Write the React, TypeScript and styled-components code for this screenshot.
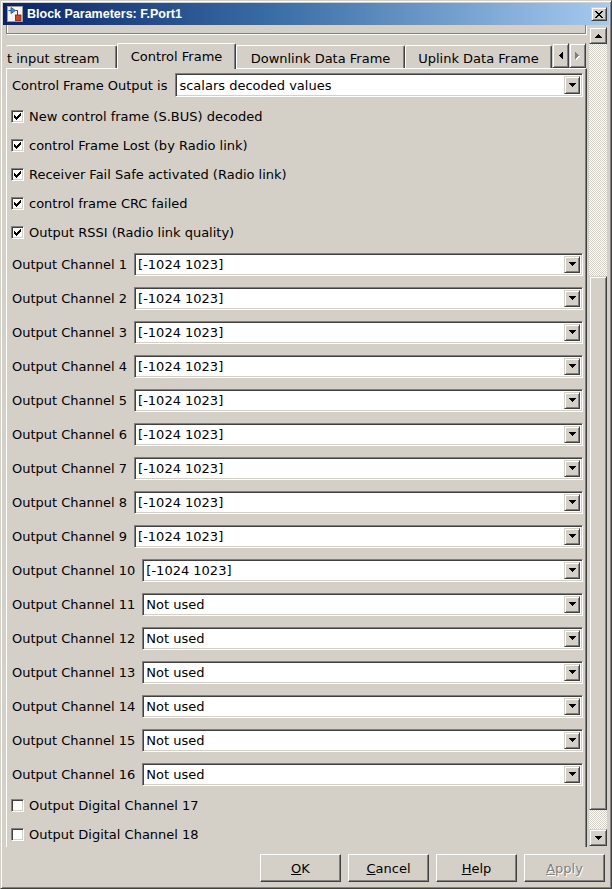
import React from "react";
import styled, { createGlobalStyle, css } from "styled-components";

const FACE = "#d4d0c8";
const SHADOW = "#808080";
const DARK = "#404040";
const HI = "#ffffff";

const GlobalStyle = createGlobalStyle`
  html, body { margin: 0; padding: 0; background: ${FACE}; }
  body {
    font-family: "DejaVu Sans", Verdana, sans-serif;
    font-size: 13px;
    color: #000;
  }
  * { box-sizing: border-box; }
`;

const frameRaised = css`
  border: 1px solid;
  border-color: ${FACE} ${DARK} ${DARK} ${FACE};
  box-shadow: inset 1px 1px ${HI}, inset -1px -1px ${SHADOW};
`;

const pushRaised = css`
  border: 1px solid;
  border-color: ${HI} ${DARK} ${DARK} ${HI};
  box-shadow: inset -1px -1px ${SHADOW};
`;

const sunken = css`
  border: 1px solid;
  border-color: ${SHADOW} ${HI} ${HI} ${SHADOW};
  box-shadow: inset 1px 1px ${DARK}, inset -1px -1px ${FACE};
`;

const Window = styled.div`
  width: 612px;
  height: 889px;
  display: flex;
  flex-direction: column;
  background: ${FACE};
  padding: 2px;
  ${frameRaised}
`;

const TitleBar = styled.div`
  height: 22px;
  flex: none;
  display: flex;
  align-items: center;
  padding: 0 2px 0 4px;
  background: linear-gradient(to right, #0a246a 0%, #3a6ea5 45%, #a6caf0 100%);
`;

const TitleText = styled.div`
  flex: 1;
  margin-left: 4px;
  color: #fff;
  font-family: "Liberation Sans", Arial, sans-serif;
  font-weight: bold;
  font-size: 12.5px;
  white-space: nowrap;
`;

const CloseButton = styled.div`
  width: 16px;
  height: 14px;
  display: flex;
  align-items: center;
  justify-content: center;
  background: ${FACE};
  ${frameRaised}
`;

const Body = styled.div`
  height: 822px;
  flex: none;
  display: flex;
`;

const Content = styled.div`
  flex: 1;
  overflow: hidden;
  display: flex;
  flex-direction: column;
  padding: 0 2px 0 3px;
`;

const GroupStub = styled.div`
  height: 9px;
  flex: none;
  margin-right: 1px;
  border: 1px solid ${SHADOW};
  border-top: none;
  box-shadow: inset 1px 0 ${HI}, 1px 1px 0 ${HI};
`;

const TabStrip = styled.div`
  margin-top: 9px;
  height: 25px;
  flex: none;
  display: flex;
  align-items: flex-end;
`;

const Tab = styled.div<{ $w: number; $active?: boolean; $clipped?: boolean }>`
  width: ${(p) => p.$w}px;
  flex: none;
  height: ${(p) => (p.$active ? 26 : 23)}px;
  display: flex;
  align-items: center;
  justify-content: ${(p) => (p.$clipped ? "flex-start" : "center")};
  padding-top: ${(p) => (p.$active ? 0 : 2)}px;
  padding-left: ${(p) => (p.$clipped ? 1 : 0)}px;
  white-space: nowrap;
  overflow: hidden;
  background: ${FACE};
  border-top: 1px solid ${HI};
  border-left: ${(p) => (p.$clipped ? "none" : `1px solid ${HI}`)};
  border-right: 1px solid ${DARK};
  border-top-left-radius: 2px;
  border-top-right-radius: 2px;
  box-shadow: inset -1px 0 ${SHADOW};
  margin-bottom: ${(p) => (p.$active ? -1 : 0)}px;
  position: ${(p) => (p.$active ? "relative" : "static")};
  z-index: ${(p) => (p.$active ? 1 : 0)};
`;

const TabArrows = styled.div`
  display: flex;
  align-self: stretch;
  margin-left: 0;
`;

const ArrowButton = styled.div<{ $w?: number }>`
  width: ${(p) => p.$w ?? 17}px;
  flex: none;
  display: flex;
  align-items: center;
  justify-content: center;
  background: ${FACE};
  ${frameRaised}
`;

const Panel = styled.div`
  flex: 1;
  display: flex;
  flex-direction: column;
  padding: 4px 3px 0 5px;
  border-top: 1px solid ${HI};
  border-left: 1px solid ${HI};
  border-right: 1px solid ${DARK};
  box-shadow: inset -1px 0 ${SHADOW};
`;

const FieldRow = styled.div<{ $h: number }>`
  height: ${(p) => p.$h}px;
  flex: none;
  display: flex;
  align-items: center;
`;

const FieldLabel = styled.span<{ $gap: number }>`
  white-space: nowrap;
  margin-right: ${(p) => p.$gap}px;
`;

const Combo = styled.div<{ $h: number }>`
  flex: 1;
  height: ${(p) => p.$h}px;
  display: flex;
  align-items: center;
  background: #fff;
  padding: 0 2px 0 3px;
  ${sunken}
`;

const ComboText = styled.span`
  flex: 1;
  white-space: nowrap;
  overflow: hidden;
`;

const DropButton = styled.div`
  width: 16px;
  align-self: stretch;
  margin: 2px 0;
  display: flex;
  align-items: center;
  justify-content: center;
  background: ${FACE};
  ${frameRaised}
`;

const CheckSection = styled.div`
  margin-top: 5px;
  display: flex;
  flex-direction: column;
`;

const CheckRow = styled.label`
  height: 29px;
  flex: none;
  display: flex;
  align-items: center;
  gap: 5px;
  margin-left: -1px;
  white-space: nowrap;
`;

const CheckBox = styled.span`
  width: 13px;
  height: 13px;
  flex: none;
  display: flex;
  align-items: center;
  justify-content: center;
  background: #fff;
  ${sunken}
`;

const Scrollbar = styled.div`
  width: 18px;
  flex: none;
  margin: 2px 2px 1px 0;
  display: flex;
  flex-direction: column;
`;

const ScrollButton = styled.div`
  height: 17px;
  flex: none;
  display: flex;
  align-items: center;
  justify-content: center;
  background: ${FACE};
  ${frameRaised}
`;

const Track = styled.div`
  flex: 1;
  display: flex;
  flex-direction: column;
  background: repeating-conic-gradient(${FACE} 0 25%, #ffffff 0 50%) 0 0 / 2px 2px;
`;

const TrackGap = styled.div`
  flex: none;
`;

const Thumb = styled.div`
  flex: none;
  background: ${FACE};
  ${frameRaised}
`;

const Footer = styled.div`
  flex: 1;
  display: flex;
  justify-content: flex-end;
  align-items: flex-start;
  gap: 7px;
  padding: 7px 4px 0 0;
`;

const PushButton = styled.div<{ $disabled?: boolean }>`
  width: 81px;
  height: 28px;
  display: flex;
  align-items: center;
  justify-content: center;
  background: ${FACE};
  color: ${(p) => (p.$disabled ? SHADOW : "#000")};
  text-shadow: ${(p) => (p.$disabled ? `1px 1px 0 ${HI}` : "none")};
  ${pushRaised}
`;

const Mnemonic = styled.span`
  text-decoration: underline;
`;

/* ---------- drawings ---------- */

const DownTri = ({ color = "#000" }: { color?: string }) => (
  <svg width="7" height="4" viewBox="0 0 7 4" shapeRendering="crispEdges">
    <path d="M0 0H7V1H6V2H5V3H4V4H3V3H2V2H1V1H0Z" fill={color} />
  </svg>
);

const UpTri = () => (
  <svg width="7" height="4" viewBox="0 0 7 4" shapeRendering="crispEdges">
    <path d="M3 0H4V1H5V2H6V3H7V4H0V3H1V2H2V1H3Z" fill="#000" />
  </svg>
);

const LeftTri = () => (
  <svg width="4" height="7" viewBox="0 0 4 7" shapeRendering="crispEdges">
    <path d="M0 3H1V2H2V1H3V0H4V7H3V6H2V5H1V4H0Z" fill="#000" />
  </svg>
);

const RightTriDisabled = () => (
  <svg width="5" height="8" viewBox="0 0 5 8" shapeRendering="crispEdges">
    <path d="M1 1H2V2H3V3H4V4H5V5H4V6H3V7H2V8H1Z" fill="#fff" />
    <path d="M0 0H1V1H2V2H3V3H4V4H3V5H2V6H1V7H0Z" fill={SHADOW} />
  </svg>
);

const CheckMark = () => (
  <svg width="7" height="7" viewBox="0 0 7 7" shapeRendering="crispEdges">
    <path d="M6 0H7V3H6V4H5V5H4V6H3V7H2V6H1V5H0V2H1V3H2V4H3V3H4V2H5V1H6Z" fill="#000" />
  </svg>
);

const CloseGlyph = () => (
  <svg width="8" height="7" viewBox="0 0 8 7" shapeRendering="crispEdges">
    <path
      d="M0 0H2V1H3V2H5V1H6V0H8V1H7V2H6V3H5V4H6V5H7V6H8V7H6V6H5V5H3V6H2V7H0V6H1V5H2V4H3V3H2V2H1V1H0Z"
      fill="#000"
    />
  </svg>
);

const BlockIcon = () => (
  <svg width="16" height="16" viewBox="0 0 16 16">
    <rect x="0.5" y="0.5" width="15" height="15" fill="#f4f4f4" stroke="#9a9a9a" />
    <path d="M1.5 4.5H4" stroke="#2060c0" strokeWidth="1" />
    <path d="M4 1.5L8.5 4.5L4 7.5Z" fill="#3c8ee0" stroke="#1a4f9c" strokeWidth="0.8" />
    <path d="M8.5 4.5H10.5V9" stroke="#404040" strokeWidth="1" fill="none" />
    <rect x="8.5" y="9" width="5.5" height="5.5" fill="#e0401a" stroke="#8a1a00" strokeWidth="0.8" />
  </svg>
);

/* ---------- data ---------- */

const checks = [
  "New control frame (S.BUS) decoded",
  "control Frame Lost (by Radio link)",
  "Receiver Fail Safe activated (Radio link)",
  "control frame CRC failed",
  "Output RSSI (Radio link quality)",
];

const channels = Array.from({ length: 16 }, (_, i) => ({
  n: i + 1,
  value: i < 10 ? "[-1024 1023]" : "Not used",
}));

const tabs = [
  { label: "t input stream", w: 111, clipped: true },
  { label: "Control Frame", w: 119, active: true },
  { label: "Downlink Data Frame", w: 169 },
  { label: "Uplink Data Frame", w: 147 },
];

const scroll = { before: 232, thumb: 534 };

const ComboBox = ({ value, h }: { value: string; h: number }) => (
  <Combo $h={h}>
    <ComboText>{value}</ComboText>
    <DropButton>
      <DownTri />
    </DropButton>
  </Combo>
);

export default function App() {
  return (
    <>
      <GlobalStyle />
      <Window>
        <TitleBar>
          <BlockIcon />
          <TitleText>Block Parameters: F.Port1</TitleText>
          <CloseButton>
            <CloseGlyph />
          </CloseButton>
        </TitleBar>
        <Body>
          <Content>
            <GroupStub />
            <TabStrip>
              {tabs.map((t) => (
                <Tab key={t.label} $w={t.w} $active={t.active} $clipped={t.clipped}>
                  {t.label}
                </Tab>
              ))}
              <TabArrows>
                <ArrowButton>
                  <LeftTri />
                </ArrowButton>
                <ArrowButton>
                  <RightTriDisabled />
                </ArrowButton>
              </TabArrows>
            </TabStrip>
            <Panel>
              <FieldRow $h={24}>
                <FieldLabel $gap={8}>Control Frame Output is</FieldLabel>
                <ComboBox value="scalars decoded values" h={24} />
              </FieldRow>
              <CheckSection>
                {checks.map((c) => (
                  <CheckRow key={c}>
                    <CheckBox>
                      <CheckMark />
                    </CheckBox>
                    {c}
                  </CheckRow>
                ))}
              </CheckSection>
              {channels.map((ch) => (
                <FieldRow $h={34} key={ch.n}>
                  <FieldLabel $gap={7}>Output Channel {ch.n}</FieldLabel>
                  <ComboBox value={ch.value} h={23} />
                </FieldRow>
              ))}
              <CheckRow>
                <CheckBox />
                Output Digital Channel 17
              </CheckRow>
              <CheckRow>
                <CheckBox />
                Output Digital Channel 18
              </CheckRow>
            </Panel>
          </Content>
          <Scrollbar>
            <ScrollButton>
              <UpTri />
            </ScrollButton>
            <Track>
              <TrackGap style={{ height: scroll.before }} />
              <Thumb style={{ height: scroll.thumb }} />
            </Track>
            <ScrollButton>
              <DownTri />
            </ScrollButton>
          </Scrollbar>
        </Body>
        <Footer>
          <PushButton>
            <Mnemonic>O</Mnemonic>K
          </PushButton>
          <PushButton>
            <Mnemonic>C</Mnemonic>ancel
          </PushButton>
          <PushButton>
            <Mnemonic>H</Mnemonic>elp
          </PushButton>
          <PushButton $disabled>
            <Mnemonic>A</Mnemonic>pply
          </PushButton>
        </Footer>
      </Window>
    </>
  );
}
